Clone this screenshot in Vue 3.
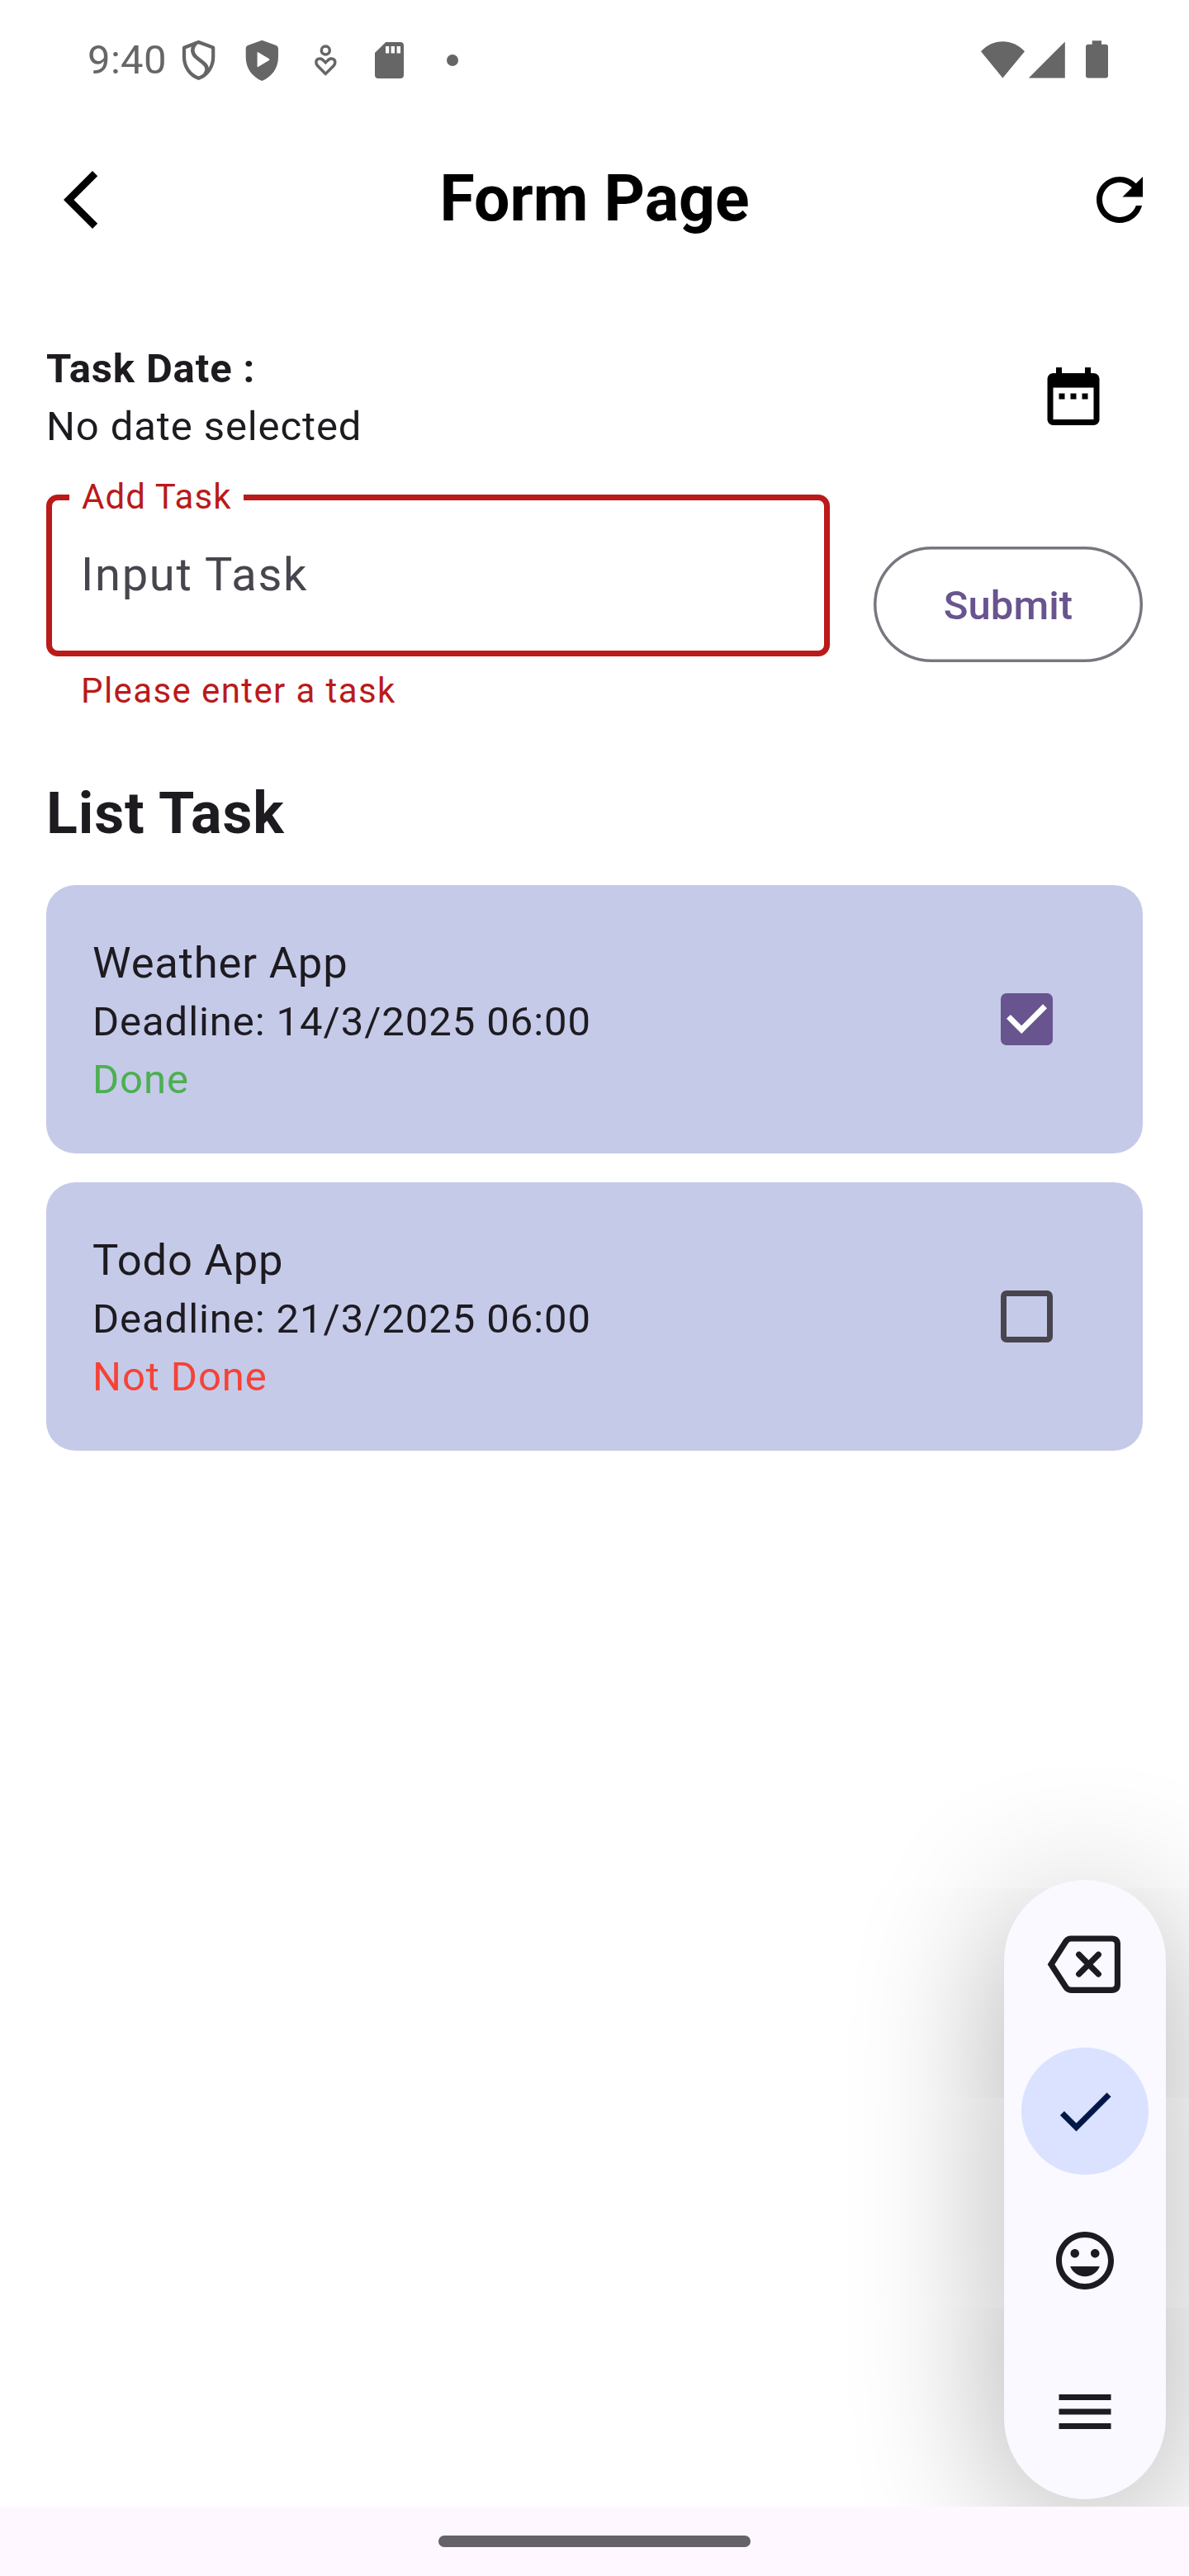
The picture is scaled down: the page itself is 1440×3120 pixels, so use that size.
<script setup>
import { ref } from 'vue'

const task = ref('')
const tasks = ref([
  { title: 'Weather App', deadline: '14/3/2025 06:00', done: true },
  { title: 'Todo App', deadline: '21/3/2025 06:00', done: false }
])
</script>

<template>
  <div class="screen">
    <div class="status">
      <span class="clock">9:40</span>
      <svg class="s-shield" width="48" height="60" viewBox="216 43 48 60">
        <path d="M240.500 51 L258.200 57.700 V69 C258.200 81 251 91 240.500 94.800 C230 91 223 81 223 69 V57.700 Z" fill="none" stroke="#666" stroke-width="4.200" stroke-linejoin="round" />
        <path d="M236.500 53 C231.500 59 232.500 65.500 239 70.500 L246 76 C251 80 252 84 249 88.500" fill="none" stroke="#666" stroke-width="4.600" stroke-linecap="round" />
      </svg>
      <svg class="s-play" width="48" height="60" viewBox="293 43 48 60">
        <path fill-rule="evenodd" fill="#666" d="M317.300 48.800 L334.500 55 Q337 56 337 58.500 V69 C337 83 329 93 317.300 98 C305.500 93 297.700 83 297.700 69 V58.500 Q297.700 56 300 55 Z M311.600 63.600 V80.600 Q311.700 81.500 312.600 81 L326 73 Q327 72.100 326 71.300 L312.600 63.200 Q311.700 62.700 311.600 63.600 Z" />
      </svg>
      <svg class="s-person" width="48" height="60" viewBox="370 43 48 60" fill="none" stroke="#666" stroke-width="3.500">
        <circle cx="394.300" cy="61" r="5" />
        <path d="M394.300 89.400 L384.700 79.800 C381.700 76.500 382.500 72.500 385.500 71.400 C389.500 70.200 391 72.500 394.300 75.800 C397.600 72.500 399.100 70.200 403.100 71.400 C406.100 72.500 407 76.500 404 79.800 Z" />
      </svg>
      <svg class="s-sd" width="48" height="60" viewBox="448 43 48 60">
        <path fill-rule="evenodd" fill="#666" d="M467.200 51 H484.700 Q489 51 489 55.300 V90.700 Q489 95 484.700 95 H458.300 Q454 95 454 90.700 V64 Z M467 56 V64.600 H471.200 V56 Z M473.600 56 V64.600 H478 V56 Z M480.600 56 V64.600 H485 V56 Z" />
      </svg>
      <svg class="s-dot" width="48" height="60" viewBox="524 43 48 60"><circle cx="548" cy="73" r="7" fill="#666" /></svg>
      <svg class="s-wifi" width="57" height="60" viewBox="1186 43 57 60">
        <path fill="#666" d="M1214.400 94.500 L1188 62.200 C1195.500 54.500 1204.500 50.300 1214.400 50.300 C1224.300 50.300 1233.500 54.500 1241 62.200 Z" />
      </svg>
      <svg class="s-signal" width="48" height="60" viewBox="1244 43 48 60"><path fill="#666" d="M1245.800 94.500 L1289.800 50.500 V94.500 Z" /></svg>
      <svg class="s-battery" width="33" height="60" viewBox="1312 43 33 60">
        <path fill="#666" d="M1322.700 49.200 H1334 V53.700 H1339 Q1342 53.700 1342 56.700 V91.500 Q1342 94.500 1339 94.500 H1318 Q1315 94.500 1315 91.500 V56.700 Q1315 53.700 1318 53.700 H1322.700 Z" />
      </svg>
    </div>

    <header class="bar">
      <svg class="back" width="84" height="84" viewBox="0 0 24 24"><path d="M17.770 3.770 16 2 6 12l10 10 1.770-1.770L9.540 12z" /></svg>
      <h1>Form Page</h1>
      <svg class="refresh" width="84" height="84" viewBox="0 0 24 24"><path d="M17.650 6.350C16.200 4.900 14.210 4 12 4c-4.420 0-7.990 3.580-7.990 8s3.570 8 7.990 8c3.730 0 6.840-2.550 7.730-6h-2.080c-.820 2.330-3.040 4-5.650 4-3.310 0-6-2.690-6-6s2.690-6 6-6c1.660 0 3.140.690 4.220 1.780L13 11h7V4l-2.350 2.350z" /></svg>
    </header>

    <main class="body">
      <section class="date-row">
        <div>
          <div class="date-label">Task Date :</div>
          <div class="date-value">No date selected</div>
        </div>
        <svg width="84" height="84" viewBox="0 0 24 24"><path d="M9 11H7v2h2v-2zm4 0h-2v2h2v-2zm4 0h-2v2h2v-2zm2-7h-1V2h-2v2H8V2H6v2H5c-1.110 0-1.990.900-1.990 2L3 20c0 1.100.890 2 2 2h14c1.100 0 2-.900 2-2V6c0-1.100-.900-2-2-2zm0 16H5V9h14v11z" /></svg>
      </section>

      <form class="form" @submit.prevent>
        <div class="field-col">
          <fieldset class="field">
            <legend>Add Task</legend>
            <input v-model="task" placeholder="Input Task">
          </fieldset>
          <p class="error">Please enter a task</p>
        </div>
        <button class="submit">Submit</button>
      </form>

      <h2>List Task</h2>

      <div class="list">
        <article v-for="t in tasks" :key="t.title" class="card">
          <div>
            <div class="name">{{ t.title }}</div>
            <div class="line">Deadline: {{ t.deadline }}</div>
            <div class="line" :class="t.done ? 'done' : 'todo'">{{ t.done ? 'Done' : 'Not Done' }}</div>
          </div>
          <div class="check" :class="{ on: t.done }">
            <svg v-if="t.done" width="63" height="63" viewBox="0 0 18 18"><path d="M2.700 8.100 7.200 12.600 15.300 4.500" fill="none" stroke="#fff" stroke-width="2" /></svg>
          </div>
        </article>
      </div>

      <aside class="keys">
        <svg class="k-back" width="98" height="84" viewBox="1265 2337 98 84" fill="none" stroke="#1b1b21" stroke-width="7.200">
          <path d="M1273 2379.200 L1290.800 2351.500 Q1293.200 2348 1297 2348 H1346.300 Q1353.400 2348 1353.400 2355 V2403.300 Q1353.400 2410.300 1346.300 2410.300 H1297 Q1293.200 2410.300 1290.800 2406.800 Z" />
          <path d="M1306.700 2367.400 L1330.300 2391 M1330.300 2367.400 L1306.700 2391" stroke-linecap="round" />
        </svg>
        <div class="k-ok">
          <svg width="84" height="84" viewBox="0 0 24 24"><path fill="#001848" d="M9 16.170 4.830 12l-1.420 1.410L9 19 21 7l-1.410-1.410z" /></svg>
        </div>
        <svg class="k-emoji" width="84" height="84" viewBox="0 0 24 24" fill="#1b1b21"><path d="M11.990 2C6.470 2 2 6.480 2 12s4.470 10 9.990 10C17.520 22 22 17.520 22 12S17.520 2 11.990 2zM12 20c-4.420 0-8-3.580-8-8s3.580-8 8-8 8 3.580 8 8-3.580 8-8 8zm3.500-9c.830 0 1.500-.670 1.500-1.500S16.330 8 15.500 8 14 8.670 14 9.500s.670 1.500 1.500 1.500zm-7 0c.830 0 1.500-.670 1.500-1.500S9.330 8 8.500 8 7 8.670 7 9.500 7.670 11 8.500 11zm3.500 6.500c2.330 0 4.310-1.460 5.110-3.500H6.890c.800 2.040 2.780 3.500 5.110 3.500z" /></svg>
        <svg class="k-menu" width="84" height="84" viewBox="0 0 24 24" fill="#1b1b21"><path d="M3 18h18v-2H3v2zm0-5h18v-2H3v2zm0-7v2h18V6H3z" /></svg>
      </aside>
    </main>

    <footer class="nav"><div class="handle"></div></footer>
  </div>
</template>

<style>
body { background: #fff; }
</style>

<style scoped>
.screen {
  width: 1440px;
  height: 3120px;
  display: flex;
  flex-direction: column;
  background: #fff;
  color: #1d1b20;
  font-family: Roboto, sans-serif;
  overflow: hidden;
}
svg { display: block; flex: none; }
h1, h2, p { margin: 0; }

.status { display: flex; height: 157px; padding: 43px 95px 0 106px; box-sizing: border-box; flex: none; }
.clock { width: 110px; font-size: 49px; line-height: 59px; color: #666; letter-spacing: 0.350px; }
.s-play, .s-person { margin-left: 29px; }
.s-sd { margin-left: 30px; }
.s-dot { margin-left: 28px; }
.s-wifi { margin-left: auto; }
.s-signal { margin-left: 1px; }
.s-battery { margin-left: 20px; }

.bar { display: grid; grid-template-columns: 1fr auto 1fr; align-items: center; height: 84px; margin-top: 43px; padding: 0 42px; color: #000; flex: none; }
.back { margin-left: 14px; }
.refresh { justify-self: end; }
.bar h1 { font-size: 77px; font-weight: 700; line-height: 82px; padding-bottom: 2px; }

.body { position: relative; flex: 1; overflow: hidden; padding: 112px 56px 0; }
.date-row { display: flex; justify-content: space-between; align-items: center; height: 168px; padding-right: 42px; }
.date-row > div { padding-top: 4px; }
.date-label, .date-value { font-size: 49px; line-height: 70px; letter-spacing: 0.900px; }
.date-label { font-weight: 700; letter-spacing: 0.875px; }
.date-row svg { fill: #000; }

.form { display: flex; align-items: flex-start; gap: 53px; margin-top: 14px; }
.field-col { width: 949px; }
.field { box-sizing: border-box; height: 217px; margin: 0; padding: 0; border: 7px solid #ba1a1a; border-radius: 14px; min-width: 0; }
.field legend { margin-left: 21px; padding: 0 0 0 15px; box-sizing: border-box; width: 211px; height: 49px; font-size: 42px; line-height: 47px; letter-spacing: 1.100px; color: #ba1a1a; white-space: nowrap; }
.field input { display: block; width: 100%; height: 138px; box-sizing: border-box; border: 0; outline: 0; background: none; padding: 0 35px; font: 56px Roboto, sans-serif; letter-spacing: 1.750px; color: #1d1b20; }
.field input::placeholder { color: #49454e; opacity: 1; }
.error { margin-top: 12px; padding-left: 42px; font-size: 42px; line-height: 60px; letter-spacing: 1.400px; color: #ba1a1a; }
.submit { box-sizing: border-box; width: 326px; height: 140px; margin: 84px 0 0; padding: 3px 0 0; border: 0; border-radius: 70px; background: transparent; box-shadow: inset 0 0 0 3.500px #7a757f; color: #68548e; font: 500 49px/137px Roboto, sans-serif; letter-spacing: 0.100px; }

h2 { margin-top: 77px; height: 128px; font-size: 70px; line-height: 82px; font-weight: 700; letter-spacing: 0.875px; }

.list { display: flex; flex-direction: column; gap: 35px; }
.card { display: flex; justify-content: space-between; align-items: flex-start; box-sizing: border-box; height: 325px; padding: 58px 109px 0 56px; border-radius: 35px; background: #c5cae9; }
.name { height: 73px; font-size: 52.500px; line-height: 72px; letter-spacing: 0.850px; }
.line { font-size: 49px; line-height: 70px; letter-spacing: 0.930px; }
.done { color: #4caf50; }
.todo { color: #f44336; }
.check { box-sizing: border-box; width: 63px; height: 63px; margin-top: 73px; border: 7px solid #49454e; border-radius: 7px; }
.check.on { border: 0; background: #68548e; }

.keys { position: absolute; right: 28px; bottom: 9px; width: 196px; height: 750px; border-radius: 98px; background: #f9f9ff; box-shadow: 0 30px 180px rgba(0, 0, 0, 0.320); display: flex; flex-direction: column; align-items: center; box-sizing: border-box; padding-top: 60px; }
.k-ok { flex: none; width: 154px; height: 154px; margin-top: 59px; border-radius: 50%; background: #dae2ff; display: flex; align-items: center; justify-content: center; }
.k-emoji { margin-top: 62px; }
.k-menu { margin-top: 99px; }

.nav { flex: none; display: flex; align-items: center; justify-content: center; height: 84px; background: #fef7ff; }
.handle { width: 378px; height: 14px; border-radius: 7px; background: #656267; }
</style>
